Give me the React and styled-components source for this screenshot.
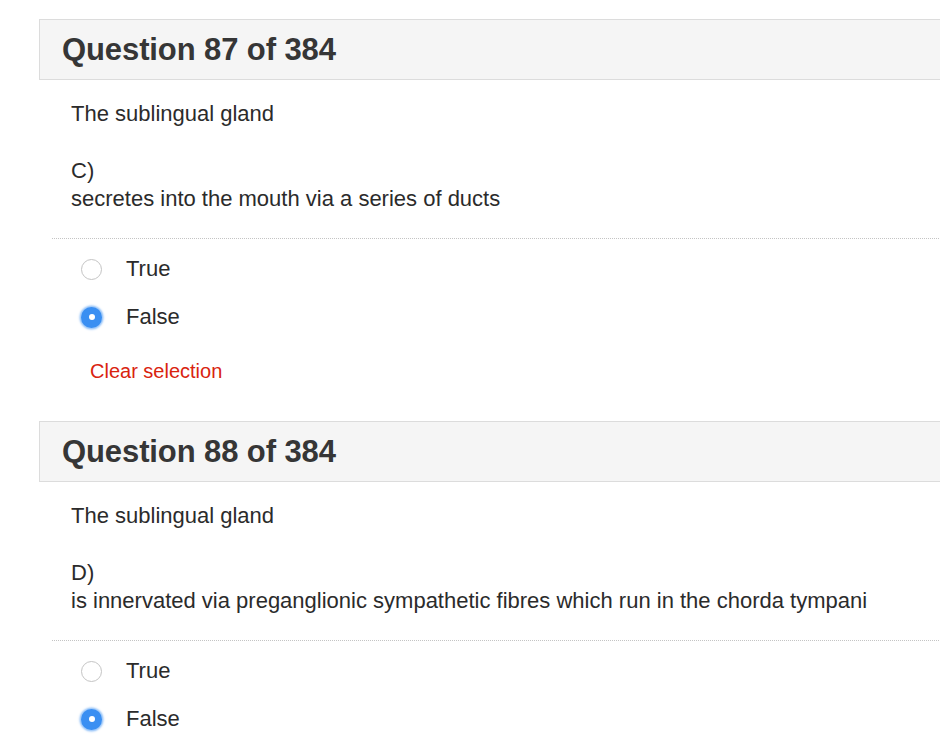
import React from 'react';
import styled, { createGlobalStyle } from 'styled-components';

const GlobalStyle = createGlobalStyle`
body {
    margin: 0;
    background: #fff;
    overflow: hidden;
    font-family: "Liberation Sans", Arial, Helvetica, sans-serif;
    color: #333;
}
`

/* layout */
const Page = styled.div`
    padding: 19px 0 0 39px;
    width: 960px;
`
const QuestionWrap = styled.div`
    margin-bottom: 37px;
`
const Header = styled.div`
    height: 59px;
    border: 1px solid #dcdcdc;
    background: #f5f5f5;
    display: flex;
    align-items: center;
    padding-left: 22px;
`
const Title = styled.h2`
    margin: 0;
    font-size: 31px;
    font-weight: 700;
    color: #363636;
    letter-spacing: -0.1px;
`
const Body = styled.div`
    margin-left: 13px;
`
const Text = styled.p`
    margin: ${props => props.margin || '0'};
    padding-left: 19px;
    font-size: 22px;
    line-height: 28px;
    color: #2b2b2b;
`
const Divider = styled.div`
    margin-top: 25px;
    border-top: 1px dotted #c4c4c4;
`
const Options = styled.div`
    padding-top: 6px;
`
const OptionRow = styled.label`
    display: flex;
    align-items: center;
    height: 48px;
    padding-left: 29px;
    font-size: 22px;
    color: #2b2b2b;
`
const Radio = styled.span`
    width: 21px;
    height: 21px;
    border-radius: 50%;
    box-sizing: border-box;
    margin-right: 24px;
    display: flex;
    align-items: center;
    justify-content: center;
    border: ${props => props.checked ? 'none' : '1.5px solid #c4c4c4'};
    background: ${props => props.checked ? '#3a8ff2' : '#fff'};
    box-shadow: ${props => props.checked ? '0 0 2px 1.5px rgba(58,143,242,0.55)' : 'none'};
    &::after {
        content: '';
        display: ${props => props.checked ? 'block' : 'none'};
        width: 6px;
        height: 6px;
        border-radius: 50%;
        background: #fff;
    }
`
const ClearLink = styled.a`
    display: block;
    margin: 17px 0 0 38px;
    font-size: 20px;
    line-height: 26px;
    color: #d9230f;
    cursor: pointer;
`

const questions = [
    { num: 87, stem: 'The sublingual gland', letter: 'C)', text: 'secretes into the mouth via a series of ducts', answer: 'False', clear: true },
    { num: 88, stem: 'The sublingual gland', letter: 'D)', text: 'is innervated via preganglionic sympathetic fibres which run in the chorda tympani', answer: 'False', clear: true },
]

const Question = ({ q }) => (
    <QuestionWrap>
        <Header>
            <Title>Question {q.num} of 384</Title>
        </Header>
        <Body>
            <Text margin='20px 0 0'>{q.stem}</Text>
            <Text margin='29px 0 0'>{q.letter}</Text>
            <Text>{q.text}</Text>
            <Divider />
            <Options>
                {['True', 'False'].map(opt => (
                    <OptionRow key={opt}>
                        <Radio checked={q.answer === opt} />
                        {opt}
                    </OptionRow>
                ))}
            </Options>
            {q.clear && <ClearLink>Clear selection</ClearLink>}
        </Body>
    </QuestionWrap>
)

export default function App() {
    return (
        <Page>
            <GlobalStyle />
            {questions.map(q => <Question key={q.num} q={q} />)}
        </Page>
    )
}
